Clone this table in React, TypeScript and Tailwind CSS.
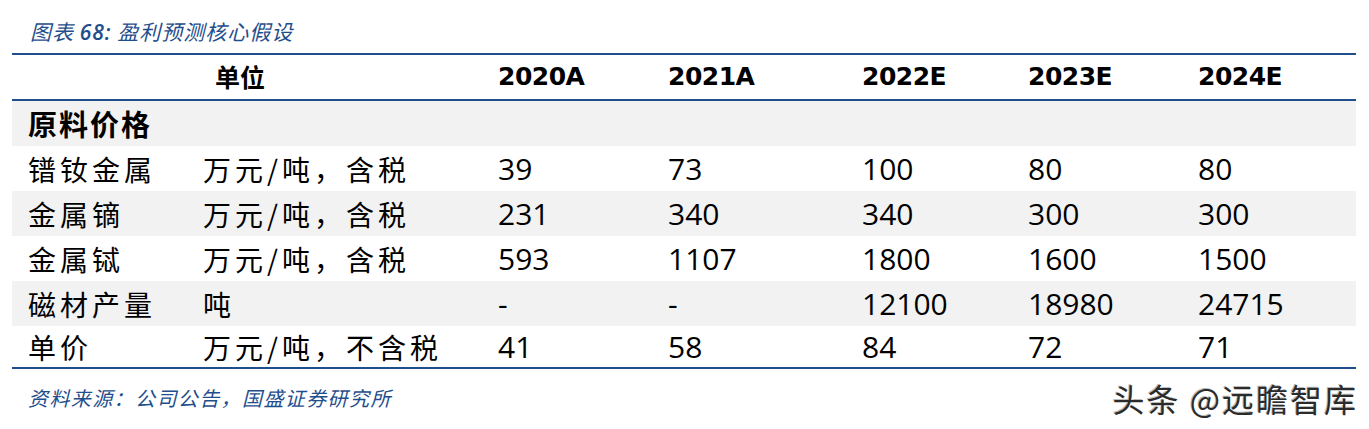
type Row = { name: string; unit: string; vals: string[]; shaded: boolean };

const ROWS: Row[] = [
  { name: '镨钕金属', unit: '万元/吨，含税', vals: ['39', '73', '100', '80', '80'], shaded: false },
  { name: '金属镝', unit: '万元/吨，含税', vals: ['231', '340', '340', '300', '300'], shaded: true },
  { name: '金属铽', unit: '万元/吨，含税', vals: ['593', '1107', '1800', '1600', '1500'], shaded: false },
  { name: '磁材产量', unit: '吨', vals: ['-', '-', '12100', '18980', '24715'], shaded: true },
  { name: '单价', unit: '万元/吨，不含税', vals: ['41', '58', '84', '72', '71'], shaded: false },
];

const YEARS = ['2020A', '2021A', '2022E', '2023E', '2024E'];

// column starts measured off the screenshot: 28 / 203 / 498 / 668 / 862 / 1028 / 1198
const GRID = 'grid grid-cols-[191px_295px_170px_194px_166px_170px_1fr] items-center';

export default function App() {
  return (
    <div className="w-[1369px] h-[429px] bg-white text-black overflow-hidden font-['Noto_Sans_CJK_SC',sans-serif]">
      <div className="h-[53px] flex items-end pb-[10px] pl-[30px]">
        <p className="text-[21px] leading-[21px] italic text-[#1f4e8c] tracking-[1px]">
          图表 <span className="font-semibold font-['Open_Sans',sans-serif]">68:</span> 盈利预测核心假设
        </p>
      </div>

      <div className="ml-[12px] w-[1344px]">
        <div className={`${GRID} h-[48px] border-y-2 border-[#1f4e8c]`}>
          <div />
          <div className="pl-[12px] text-[25px] font-bold">单位</div>
          {YEARS.map((y) => (
            <div key={y} className="text-[25px] font-bold tracking-[-0.5px] font-['DejaVu_Sans',sans-serif]">
              {y}
            </div>
          ))}
        </div>

        <div className="h-[45px] bg-[#f2f2f2] flex items-center pl-[16px]">
          <span className="text-[29px] font-bold tracking-[2px]">原料价格</span>
        </div>

        {ROWS.map((r, i) => (
          <div
            key={r.name}
            className={`${GRID} ${i === ROWS.length - 1 ? 'h-[43px] border-b-2 border-[#1f4e8c]' : 'h-[45px]'} ${
              r.shaded ? 'bg-[#f2f2f2]' : 'bg-white'
            }`}
          >
            <div className="pl-[16px] text-[28px] tracking-[4px] leading-none">{r.name}</div>
            <div className="text-[28px] tracking-[4px] leading-none">{r.unit}</div>
            {r.vals.map((v, j) => (
              <div key={j} className="text-[30px] leading-none font-['Open_Sans',sans-serif]">
                {v}
              </div>
            ))}
          </div>
        ))}
      </div>

      <div className="flex items-center justify-between h-[58px] pl-[28px] pr-[11px]">
        <p className="text-[20px] italic text-[#1f4e8c] tracking-[1.4px]">资料来源：公司公告，国盛证券研究所</p>
        <p className="text-[32px] text-[#2b2b2b] tracking-[2px] [text-shadow:1px_1px_0_#ffffff,-1px_-1px_0_#bbbbbb]">
          头条 @远瞻智库
        </p>
      </div>
    </div>
  );
}
